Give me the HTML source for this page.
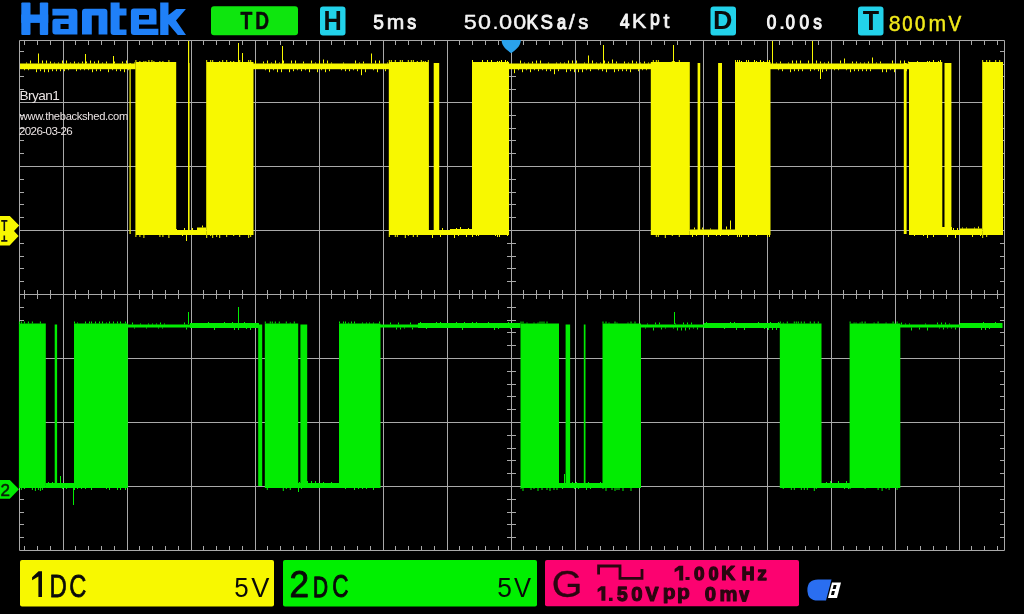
<!DOCTYPE html><html><head><meta charset="utf-8"><style>
html,body{margin:0;padding:0;background:#000;width:1024px;height:614px;overflow:hidden}
svg{position:absolute;left:0;top:0;filter:blur(0.3px)}
text{font-family:"Liberation Sans",sans-serif}
</style></head><body>
<svg width="1024" height="614" viewBox="0 0 1024 614">
<rect width="1024" height="614" fill="#000"/>
<path d="M63.5 40V551 M127.5 40V551 M191.5 40V551 M255.5 40V551 M319.5 40V551 M383.5 40V551 M447.5 40V551 M511.5 40V551 M575.5 40V551 M639.5 40V551 M703.5 40V551 M767.5 40V551 M831.5 40V551 M895.5 40V551 M959.5 40V551 M20 102.5H1004 M20 166.5H1004 M20 230.5H1004 M20 294.5H1004 M20 358.5H1004 M20 422.5H1004 M20 486.5H1004 M19.5 40.5H1004.5V550.5H19.5Z M24.5 41V45 M24.5 550V546 M24.5 290V299 M37.5 41V45 M37.5 550V546 M37.5 290V299 M50.5 41V45 M50.5 550V546 M50.5 290V299 M75.5 41V45 M75.5 550V546 M75.5 290V299 M88.5 41V45 M88.5 550V546 M88.5 290V299 M101.5 41V45 M101.5 550V546 M101.5 290V299 M114.5 41V45 M114.5 550V546 M114.5 290V299 M139.5 41V45 M139.5 550V546 M139.5 290V299 M152.5 41V45 M152.5 550V546 M152.5 290V299 M165.5 41V45 M165.5 550V546 M165.5 290V299 M178.5 41V45 M178.5 550V546 M178.5 290V299 M203.5 41V45 M203.5 550V546 M203.5 290V299 M216.5 41V45 M216.5 550V546 M216.5 290V299 M229.5 41V45 M229.5 550V546 M229.5 290V299 M242.5 41V45 M242.5 550V546 M242.5 290V299 M267.5 41V45 M267.5 550V546 M267.5 290V299 M280.5 41V45 M280.5 550V546 M280.5 290V299 M293.5 41V45 M293.5 550V546 M293.5 290V299 M306.5 41V45 M306.5 550V546 M306.5 290V299 M331.5 41V45 M331.5 550V546 M331.5 290V299 M344.5 41V45 M344.5 550V546 M344.5 290V299 M357.5 41V45 M357.5 550V546 M357.5 290V299 M370.5 41V45 M370.5 550V546 M370.5 290V299 M395.5 41V45 M395.5 550V546 M395.5 290V299 M408.5 41V45 M408.5 550V546 M408.5 290V299 M421.5 41V45 M421.5 550V546 M421.5 290V299 M434.5 41V45 M434.5 550V546 M434.5 290V299 M459.5 41V45 M459.5 550V546 M459.5 290V299 M472.5 41V45 M472.5 550V546 M472.5 290V299 M485.5 41V45 M485.5 550V546 M485.5 290V299 M498.5 41V45 M498.5 550V546 M498.5 290V299 M523.5 41V45 M523.5 550V546 M523.5 290V299 M536.5 41V45 M536.5 550V546 M536.5 290V299 M549.5 41V45 M549.5 550V546 M549.5 290V299 M562.5 41V45 M562.5 550V546 M562.5 290V299 M587.5 41V45 M587.5 550V546 M587.5 290V299 M600.5 41V45 M600.5 550V546 M600.5 290V299 M613.5 41V45 M613.5 550V546 M613.5 290V299 M626.5 41V45 M626.5 550V546 M626.5 290V299 M651.5 41V45 M651.5 550V546 M651.5 290V299 M664.5 41V45 M664.5 550V546 M664.5 290V299 M677.5 41V45 M677.5 550V546 M677.5 290V299 M690.5 41V45 M690.5 550V546 M690.5 290V299 M715.5 41V45 M715.5 550V546 M715.5 290V299 M728.5 41V45 M728.5 550V546 M728.5 290V299 M741.5 41V45 M741.5 550V546 M741.5 290V299 M754.5 41V45 M754.5 550V546 M754.5 290V299 M779.5 41V45 M779.5 550V546 M779.5 290V299 M792.5 41V45 M792.5 550V546 M792.5 290V299 M805.5 41V45 M805.5 550V546 M805.5 290V299 M818.5 41V45 M818.5 550V546 M818.5 290V299 M843.5 41V45 M843.5 550V546 M843.5 290V299 M856.5 41V45 M856.5 550V546 M856.5 290V299 M869.5 41V45 M869.5 550V546 M869.5 290V299 M882.5 41V45 M882.5 550V546 M882.5 290V299 M907.5 41V45 M907.5 550V546 M907.5 290V299 M920.5 41V45 M920.5 550V546 M920.5 290V299 M933.5 41V45 M933.5 550V546 M933.5 290V299 M946.5 41V45 M946.5 550V546 M946.5 290V299 M971.5 41V45 M971.5 550V546 M971.5 290V299 M984.5 41V45 M984.5 550V546 M984.5 290V299 M997.5 41V45 M997.5 550V546 M997.5 290V299 M20 51.5H24 M1004 51.5H1000 M20 64.5H24 M1004 64.5H1000 M507 64.5H516 M20 76.5H24 M1004 76.5H1000 M507 76.5H516 M20 89.5H24 M1004 89.5H1000 M507 89.5H516 M20 115.5H24 M1004 115.5H1000 M507 115.5H516 M20 128.5H24 M1004 128.5H1000 M507 128.5H516 M20 140.5H24 M1004 140.5H1000 M507 140.5H516 M20 153.5H24 M1004 153.5H1000 M507 153.5H516 M20 179.5H24 M1004 179.5H1000 M507 179.5H516 M20 192.5H24 M1004 192.5H1000 M507 192.5H516 M20 204.5H24 M1004 204.5H1000 M507 204.5H516 M20 217.5H24 M1004 217.5H1000 M507 217.5H516 M20 243.5H24 M1004 243.5H1000 M507 243.5H516 M20 256.5H24 M1004 256.5H1000 M507 256.5H516 M20 268.5H24 M1004 268.5H1000 M507 268.5H516 M20 281.5H24 M1004 281.5H1000 M507 281.5H516 M20 307.5H24 M1004 307.5H1000 M507 307.5H516 M20 320.5H24 M1004 320.5H1000 M507 320.5H516 M20 332.5H24 M1004 332.5H1000 M507 332.5H516 M20 345.5H24 M1004 345.5H1000 M507 345.5H516 M20 371.5H24 M1004 371.5H1000 M507 371.5H516 M20 384.5H24 M1004 384.5H1000 M507 384.5H516 M20 396.5H24 M1004 396.5H1000 M507 396.5H516 M20 409.5H24 M1004 409.5H1000 M507 409.5H516 M20 435.5H24 M1004 435.5H1000 M507 435.5H516 M20 448.5H24 M1004 448.5H1000 M507 448.5H516 M20 460.5H24 M1004 460.5H1000 M507 460.5H516 M20 473.5H24 M1004 473.5H1000 M507 473.5H516 M20 499.5H24 M1004 499.5H1000 M507 499.5H516 M20 512.5H24 M1004 512.5H1000 M507 512.5H516 M20 524.5H24 M1004 524.5H1000 M507 524.5H516 M20 537.5H24 M1004 537.5H1000 M507 537.5H516" stroke="#a9a9a9" stroke-width="1" fill="none"/>
<rect x="20" y="63.5" width="115.5" height="5.700000000000003" fill="#f8f800"/><path d="M24.5 69.2v1 M26.5 63.5v-1 M28.5 69.2v1 M30.5 63.5v-3 M36.5 69.2v3 M38.5 63.5v-10 M40.5 69.2v2 M42.5 63.5v-3 M44.5 69.2v3 M46.5 63.5v-3 M48.5 69.2v3 M50.5 63.5v-2 M52.5 69.2v2 M54.5 63.5v-1 M56.5 69.2v2 M58.5 63.5v-1 M60.5 69.2v2 M62.5 63.5v-3 M64.5 69.2v2 M66.5 63.5v-3 M68.5 69.2v1 M70.5 63.5v-1 M74.5 63.5v-2 M76.5 69.2v2 M78.5 63.5v-1 M80.5 69.2v1 M82.5 63.5v-2 M84.5 69.2v1 M86.5 63.5v-2 M88.5 69.2v1 M90.5 63.5v-3 M92.5 69.2v3 M94.5 63.5v-2 M96.5 69.2v2 M98.5 63.5v-3 M100.5 69.2v2 M102.5 63.5v-1 M106.5 63.5v-2 M108.5 69.2v3 M112.5 69.2v1 M114.5 63.5v-2 M116.5 69.2v2 M120.5 69.2v2 M122.5 63.5v-2 M124.5 69.2v3 M126.5 63.5v-3 M128.5 69.2v1 M134.5 63.5v-1" stroke="#f8f800" stroke-width="1"/><rect x="253" y="63.5" width="136" height="5.700000000000003" fill="#f8f800"/><path d="M255.5 63.5v-3 M263.5 63.5v-2 M265.5 69.2v1 M267.5 63.5v-3 M269.5 69.2v3 M271.5 63.5v-1 M273.5 69.2v1 M275.5 63.5v-3 M277.5 69.2v3 M279.5 63.5v-1 M281.5 69.2v3 M283.5 63.5v-3 M289.5 69.2v3 M291.5 63.5v-3 M293.5 69.2v2 M295.5 63.5v-3 M297.5 69.2v1 M301.5 69.2v2 M303.5 63.5v-2 M305.5 69.2v1 M309.5 69.2v3 M311.5 63.5v-3 M315.5 63.5v-1 M317.5 69.2v3 M319.5 63.5v-3 M321.5 69.2v1 M323.5 63.5v-4 M325.5 69.2v3 M327.5 63.5v-3 M329.5 69.2v2 M331.5 63.5v-1 M341.5 69.2v1 M343.5 63.5v-1 M345.5 69.2v2 M349.5 69.2v2 M353.5 69.2v1 M355.5 63.5v-3 M357.5 69.2v2 M359.5 63.5v-1 M361.5 69.2v6 M363.5 63.5v-2 M365.5 69.2v3 M371.5 63.5v-10 M373.5 69.2v1 M375.5 63.5v-3 M377.5 69.2v3 M379.5 63.5v-3 M385.5 69.2v2 M387.5 63.5v-1" stroke="#f8f800" stroke-width="1"/><rect x="509" y="63.5" width="142" height="5.700000000000003" fill="#f8f800"/><path d="M514.5 69.2v4 M518.5 69.2v1 M520.5 63.5v-3 M522.5 69.2v3 M524.5 63.5v-1 M526.5 69.2v1 M528.5 63.5v-1 M530.5 69.2v3 M532.5 63.5v-2 M534.5 69.2v1 M536.5 63.5v-3 M538.5 69.2v2 M540.5 63.5v-3 M542.5 69.2v1 M546.5 69.2v2 M548.5 63.5v-1 M550.5 69.2v2 M554.5 69.2v5 M556.5 63.5v-1 M558.5 69.2v2 M560.5 63.5v-1 M564.5 63.5v-1 M566.5 69.2v3 M568.5 63.5v-3 M570.5 69.2v2 M572.5 63.5v-3 M574.5 69.2v3 M576.5 63.5v-3 M578.5 69.2v3 M582.5 69.2v3 M584.5 63.5v-1 M586.5 69.2v1 M588.5 63.5v-8 M590.5 69.2v2 M592.5 63.5v-3 M596.5 63.5v-1 M598.5 69.2v1 M600.5 63.5v-1 M602.5 69.2v2 M604.5 63.5v-3 M606.5 69.2v3 M608.5 63.5v-2 M612.5 63.5v-4 M614.5 69.2v3 M616.5 63.5v-2 M618.5 69.2v2 M622.5 69.2v2 M624.5 63.5v-2 M626.5 69.2v2 M628.5 63.5v-1 M630.5 69.2v3 M632.5 63.5v-3 M636.5 63.5v-2 M638.5 69.2v2 M640.5 63.5v-1 M642.5 69.2v1 M644.5 63.5v-2 M646.5 69.2v1 M648.5 63.5v-1" stroke="#f8f800" stroke-width="1"/><rect x="770" y="63.5" width="139.5" height="5.700000000000003" fill="#f8f800"/><path d="M776.5 63.5v-1 M778.5 69.2v1 M780.5 63.5v-2 M782.5 69.2v2 M788.5 63.5v-1 M790.5 69.2v3 M792.5 63.5v-3 M794.5 69.2v2 M796.5 63.5v-3 M798.5 69.2v2 M800.5 63.5v-3 M802.5 69.2v2 M808.5 63.5v-3 M810.5 69.2v2 M812.5 63.5v-2 M814.5 69.2v1 M816.5 63.5v-3 M818.5 69.2v2 M820.5 63.5v-2 M822.5 69.2v3 M824.5 63.5v-1 M826.5 69.2v2 M828.5 63.5v-2 M834.5 69.2v1 M838.5 69.2v1 M840.5 63.5v-3 M844.5 63.5v-5 M846.5 69.2v1 M850.5 69.2v3 M852.5 63.5v-2 M854.5 69.2v2 M856.5 63.5v-2 M858.5 69.2v2 M860.5 63.5v-1 M862.5 69.2v2 M864.5 63.5v-1 M866.5 69.2v2 M868.5 63.5v-2 M870.5 69.2v2 M872.5 63.5v-6 M876.5 63.5v-1 M880.5 63.5v-2 M882.5 69.2v3 M886.5 69.2v3 M890.5 69.2v1 M892.5 63.5v-3 M894.5 69.2v3 M900.5 63.5v-3 M904.5 63.5v-3 M906.5 69.2v2 M908.5 63.5v-2" stroke="#f8f800" stroke-width="1"/><rect x="176" y="230" width="21" height="5" fill="#f8f800"/><path d="M176.5 230v-1 M182.5 235v1 M184.5 230v-2 M186.5 235v6 M192.5 230v-2" stroke="#f8f800" stroke-width="1"/><rect x="197" y="227.5" width="9" height="7.5" fill="#f8f800"/><path d="M202.5 227.5v-2" stroke="#f8f800" stroke-width="1"/><rect x="428" y="230" width="22" height="5" fill="#f8f800"/><path d="M432.5 235v3 M434.5 230v-1 M440.5 235v2 M442.5 230v-2" stroke="#f8f800" stroke-width="1"/><rect x="450" y="229" width="22" height="6" fill="#f8f800"/><path d="M454.5 235v3 M456.5 229v-1 M458.5 235v1 M460.5 229v-2 M466.5 235v2 M468.5 229v-1" stroke="#f8f800" stroke-width="1"/><rect x="690" y="229.5" width="46" height="5.5" fill="#f8f800"/><path d="M692.5 235v2 M694.5 229.5v-2 M696.5 235v1 M702.5 229.5v-2 M708.5 235v2 M710.5 229.5v-1 M716.5 235v1 M720.5 235v1 M726.5 229.5v-3 M728.5 235v1 M730.5 229.5v-9" stroke="#f8f800" stroke-width="1"/><rect x="942" y="230" width="18" height="5" fill="#f8f800"/><path d="M947.5 235v2 M953.5 230v-2 M955.5 235v3 M957.5 230v-2" stroke="#f8f800" stroke-width="1"/><rect x="960" y="228.5" width="22" height="6.5" fill="#f8f800"/><path d="M962.5 228.5v-1 M966.5 228.5v-1 M972.5 235v2 M974.5 228.5v-1 M978.5 228.5v-2 M980.5 235v1" stroke="#f8f800" stroke-width="1"/><rect x="135.4" y="62" width="40.79999999999998" height="173" fill="#f8f800"/><path d="M135.9 62v-2 M135.9 235v2 M139.9 62v-1 M139.9 235v2 M143.9 62v-1 M143.9 235v3 M145.9 62v-1 M148.9 62v-2 M151.9 62v-2 M153.9 62v-1 M159.9 62v-1 M159.9 235v2 M162.9 62v-1 M162.9 235v2 M168.9 62v-2 M168.9 235v3" stroke="#f8f800" stroke-width="1"/><rect x="206.2" y="62" width="47.30000000000001" height="173" fill="#f8f800"/><path d="M206.7 62v-2 M206.7 235v3 M210.7 62v-2 M210.7 235v1 M212.7 62v-2 M212.7 235v3 M216.7 235v2 M219.7 62v-1 M219.7 235v3 M222.7 62v-2 M226.7 62v-2 M226.7 235v2 M230.7 62v-1 M233.7 62v-1 M233.7 235v1 M239.7 62v-2 M239.7 235v2 M248.7 62v-2 M248.7 235v3 M250.7 62v-2 M250.7 235v2" stroke="#f8f800" stroke-width="1"/><rect x="388.8" y="62" width="40.099999999999966" height="173" fill="#f8f800"/><path d="M389.3 62v-2 M389.3 235v2 M391.3 62v-2 M395.3 62v-2 M395.3 235v2 M397.3 235v2 M400.3 62v-2 M402.3 62v-2 M405.3 235v3 M408.3 62v-2 M408.3 235v1 M411.3 62v-2 M413.3 62v-2 M413.3 235v2 M417.3 62v-1 M417.3 235v2 M421.3 62v-2 M423.3 62v-1 M425.3 62v-1 M428.3 62v-2" stroke="#f8f800" stroke-width="1"/><rect x="472" y="62" width="37" height="173" fill="#f8f800"/><path d="M472.5 62v-2 M472.5 235v2 M476.5 235v1 M478.5 235v1 M482.5 62v-2 M487.5 62v-2 M491.5 62v-2 M495.5 235v1 M497.5 62v-1 M497.5 235v2 M499.5 62v-1 M499.5 235v2 M501.5 62v-2 M505.5 62v-2 M507.5 62v-1 M507.5 235v1" stroke="#f8f800" stroke-width="1"/><rect x="650.8" y="62" width="39.0" height="173" fill="#f8f800"/><path d="M653.3 62v-2 M656.3 62v-2 M656.3 235v2 M658.3 62v-2 M658.3 235v2 M665.3 235v3 M672.3 62v-1 M672.3 235v1 M674.3 62v-1 M679.3 62v-2 M679.3 235v2" stroke="#f8f800" stroke-width="1"/><rect x="735" y="62" width="35.5" height="173" fill="#f8f800"/><path d="M735.5 62v-2 M737.5 62v-2 M737.5 235v2 M739.5 62v-2 M739.5 235v2 M741.5 62v-1 M741.5 235v2 M746.5 62v-2 M748.5 62v-2 M748.5 235v2 M754.5 62v-2 M756.5 62v-1 M756.5 235v1 M760.5 62v-2 M763.5 62v-1 M767.5 62v-2 M767.5 235v2 M769.5 62v-2 M769.5 235v2" stroke="#f8f800" stroke-width="1"/><rect x="909" y="62" width="33.299999999999955" height="173" fill="#f8f800"/><path d="M914.5 235v1 M917.5 62v-1 M923.5 235v1 M927.5 62v-1 M927.5 235v3 M929.5 62v-1 M933.5 62v-2 M933.5 235v2 M938.5 62v-1 M940.5 62v-2" stroke="#f8f800" stroke-width="1"/><rect x="982.2" y="62" width="20.799999999999955" height="173" fill="#f8f800"/><path d="M982.7 62v-2 M982.7 235v3 M986.7 62v-2 M986.7 235v2 M989.7 62v-2 M995.7 62v-2 M999.7 62v-2" stroke="#f8f800" stroke-width="1"/><rect x="129.5" y="63" width="1.2" height="171" fill="#f8f800"/><rect x="188.3" y="63" width="1.2" height="171" fill="#f8f800"/><rect x="433.7" y="63" width="5.5" height="171" fill="#f8f800"/><rect x="697.6" y="63" width="2.6" height="171" fill="#f8f800"/><rect x="718.1" y="63" width="3.9" height="171" fill="#f8f800"/><rect x="903.8" y="63" width="2.8" height="171" fill="#f8f800"/><rect x="944.5" y="63" width="6.9" height="171" fill="#f8f800"/><rect x="942" y="227" width="10" height="8" fill="#f8f800"/><path d="M238.5 64V43 M242.5 64V53 M282.5 64V46 M603.5 64V45 M673.5 64V45 M772.5 64V41 M812.5 64V41 M820.5 69V79 M85.5 64V54 M113.5 64V56" stroke="#f8f800" stroke-width="1"/><rect x="188" y="41" width="1.2" height="194" fill="#f8f800"/><rect x="127.5" y="324.5" width="62.5" height="3.0" fill="#02ec02"/><path d="M132.5 324.5v-2 M134.5 327.5v1 M140.5 324.5v-1 M146.5 327.5v1 M148.5 324.5v-1 M152.5 324.5v-1 M156.5 324.5v-1 M158.5 327.5v1 M160.5 324.5v-2 M162.5 327.5v1 M164.5 324.5v-1 M184.5 324.5v-2 M186.5 327.5v2" stroke="#02ec02" stroke-width="1"/><rect x="190" y="323" width="69" height="5" fill="#02ec02"/><path d="M208.5 323v-1 M214.5 328v2 M224.5 323v-1 M232.5 323v-1 M234.5 328v2 M238.5 328v2 M244.5 323v-1 M246.5 328v1 M250.5 328v2" stroke="#02ec02" stroke-width="1"/><rect x="380" y="324.5" width="38" height="3.0" fill="#02ec02"/><path d="M390.5 324.5v-2 M396.5 327.5v2 M398.5 324.5v-2 M400.5 327.5v2 M404.5 327.5v1 M410.5 324.5v-2 M412.5 327.5v2" stroke="#02ec02" stroke-width="1"/><rect x="418" y="323" width="102.5" height="5" fill="#02ec02"/><path d="M420.5 323v-1 M426.5 328v1 M436.5 323v-1 M440.5 323v-1 M456.5 323v-1 M462.5 328v2 M464.5 323v-1 M472.5 323v-1 M476.5 323v-1 M488.5 323v-1 M494.5 328v2 M498.5 328v1 M508.5 323v-1 M510.5 328v1" stroke="#02ec02" stroke-width="1"/><rect x="641" y="324.5" width="63" height="3.0" fill="#02ec02"/><path d="M645.5 327.5v1 M647.5 324.5v-1 M653.5 327.5v3 M655.5 324.5v-2 M659.5 324.5v-2 M661.5 327.5v2 M665.5 327.5v1 M673.5 327.5v1 M675.5 324.5v-1 M677.5 327.5v3 M681.5 327.5v3 M683.5 324.5v-2 M685.5 327.5v3 M687.5 324.5v-2 M689.5 327.5v2 M691.5 324.5v-2 M693.5 327.5v1 M697.5 327.5v2" stroke="#02ec02" stroke-width="1"/><rect x="704" y="323" width="76" height="5" fill="#02ec02"/><path d="M706.5 323v-1 M724.5 328v1 M730.5 323v-1 M734.5 323v-1 M736.5 328v2 M744.5 328v2 M758.5 323v-1 M764.5 328v1 M768.5 328v2 M770.5 323v-1 M772.5 328v2 M776.5 328v2 M778.5 323v-1" stroke="#02ec02" stroke-width="1"/><rect x="900" y="324.5" width="60" height="3.0" fill="#02ec02"/><path d="M901.5 324.5v-2 M905.5 324.5v-1 M909.5 324.5v-1 M911.5 327.5v3 M919.5 327.5v2 M925.5 324.5v-1 M927.5 327.5v3 M937.5 324.5v-2 M939.5 327.5v1 M941.5 324.5v-2 M943.5 327.5v2 M945.5 324.5v-2 M947.5 327.5v1 M949.5 324.5v-1 M951.5 327.5v1 M955.5 327.5v2" stroke="#02ec02" stroke-width="1"/><rect x="960" y="323" width="42.5" height="5" fill="#02ec02"/><path d="M981.5 328v2 M983.5 323v-1 M985.5 328v2 M989.5 328v1 M995.5 323v-1" stroke="#02ec02" stroke-width="1"/><rect x="45.5" y="483" width="28.5" height="5" fill="#02ec02"/><path d="M48.5 483v-1 M52.5 483v-1 M60.5 483v-7 M62.5 488v1 M66.5 488v1" stroke="#02ec02" stroke-width="1"/><rect x="298" y="483" width="41" height="5" fill="#02ec02"/><path d="M299.5 483v-1 M301.5 488v1 M307.5 483v-2 M311.5 483v-2 M315.5 483v-2 M323.5 483v-1 M331.5 483v-1" stroke="#02ec02" stroke-width="1"/><rect x="559" y="483" width="44" height="5" fill="#02ec02"/><path d="M562.5 488v1 M564.5 483v-9 M568.5 483v-2 M572.5 483v-1 M574.5 488v1 M576.5 483v-1 M578.5 488v1 M584.5 483v-1 M586.5 488v2 M588.5 483v-1 M590.5 488v1 M600.5 483v-1" stroke="#02ec02" stroke-width="1"/><rect x="821" y="483" width="29" height="5" fill="#02ec02"/><path d="M826.5 483v-1 M830.5 483v-2 M838.5 483v-2 M844.5 488v1 M846.5 483v-2 M848.5 488v1" stroke="#02ec02" stroke-width="1"/><rect x="18.9" y="323.5" width="26.9" height="164.5" fill="#02ec02"/><path d="M19.4 323.5v-2 M21.4 323.5v-2 M21.4 488v2 M24.4 323.5v-2 M24.4 488v1 M28.4 323.5v-2 M32.4 323.5v-2 M32.4 488v2 M35.4 488v3 M38.4 488v2 M40.4 323.5v-2 M40.4 488v3 M42.4 488v2" stroke="#02ec02" stroke-width="1"/><rect x="74" y="323.5" width="53.8" height="164.5" fill="#02ec02"/><path d="M74.5 323.5v-2 M74.5 488v2 M77.5 323.5v-1 M77.5 488v1 M81.5 488v1 M85.5 323.5v-2 M85.5 488v1 M89.5 323.5v-2 M91.5 323.5v-2 M91.5 488v2 M95.5 323.5v-2 M99.5 323.5v-2 M102.5 323.5v-2 M106.5 323.5v-1 M106.5 488v1 M109.5 323.5v-2 M109.5 488v2 M113.5 323.5v-2 M117.5 323.5v-2 M117.5 488v2 M120.5 323.5v-2 M120.5 488v2 M125.5 323.5v-2 M125.5 488v2" stroke="#02ec02" stroke-width="1"/><rect x="264.8" y="323.5" width="33.39999999999998" height="164.5" fill="#02ec02"/><path d="M265.3 323.5v-2 M267.3 488v2 M270.3 323.5v-2 M272.3 323.5v-2 M275.3 323.5v-2 M279.3 323.5v-2 M283.3 488v3 M286.3 323.5v-2 M286.3 488v1 M290.3 323.5v-1 M290.3 488v2 M294.3 323.5v-2" stroke="#02ec02" stroke-width="1"/><rect x="339" y="323.5" width="41.5" height="164.5" fill="#02ec02"/><path d="M339.5 323.5v-2 M343.5 323.5v-2 M345.5 323.5v-2 M345.5 488v1 M348.5 323.5v-1 M351.5 323.5v-2 M354.5 323.5v-2 M354.5 488v2 M358.5 488v1 M362.5 323.5v-1 M362.5 488v1 M366.5 323.5v-1 M366.5 488v1 M369.5 323.5v-1 M373.5 323.5v-1 M373.5 488v2 M379.5 323.5v-2" stroke="#02ec02" stroke-width="1"/><rect x="520.5" y="323.5" width="38.5" height="164.5" fill="#02ec02"/><path d="M521.0 323.5v-2 M521.0 488v1 M523.0 323.5v-2 M523.0 488v3 M527.0 323.5v-1 M531.0 488v2 M534.0 323.5v-1 M534.0 488v1 M538.0 323.5v-1 M538.0 488v3 M540.0 323.5v-2 M542.0 323.5v-2 M542.0 488v2 M544.0 323.5v-2 M547.0 323.5v-2 M547.0 488v2 M550.0 488v3 M554.0 488v2 M557.0 488v2" stroke="#02ec02" stroke-width="1"/><rect x="602.5" y="323.5" width="38.5" height="164.5" fill="#02ec02"/><path d="M603.0 323.5v-2 M603.0 488v1 M606.0 323.5v-2 M606.0 488v3 M609.0 323.5v-1 M612.0 488v2 M615.0 323.5v-2 M615.0 488v3 M617.0 323.5v-1 M617.0 488v2 M619.0 488v2 M623.0 488v3 M628.0 323.5v-1 M631.0 323.5v-2 M631.0 488v3 M635.0 323.5v-2" stroke="#02ec02" stroke-width="1"/><rect x="779.8" y="323.5" width="41.700000000000045" height="164.5" fill="#02ec02"/><path d="M780.3 323.5v-2 M783.3 323.5v-1 M783.3 488v1 M787.3 323.5v-2 M791.3 488v2 M794.3 323.5v-2 M794.3 488v2 M796.3 323.5v-2 M798.3 323.5v-2 M801.3 323.5v-2 M801.3 488v2 M804.3 323.5v-2 M804.3 488v2 M807.3 488v2 M810.3 323.5v-2 M814.3 323.5v-2 M814.3 488v3 M816.3 488v1 M818.3 323.5v-2" stroke="#02ec02" stroke-width="1"/><rect x="849.6" y="323.5" width="50.69999999999993" height="164.5" fill="#02ec02"/><path d="M850.1 323.5v-2 M850.1 488v1 M854.1 323.5v-1 M856.1 323.5v-1 M860.1 323.5v-1 M862.1 323.5v-2 M865.1 323.5v-2 M865.1 488v1 M874.1 323.5v-1 M878.1 323.5v-2 M878.1 488v2 M882.1 488v3 M886.1 323.5v-1 M886.1 488v1 M889.1 488v2 M893.1 323.5v-2 M897.1 323.5v-2 M897.1 488v2" stroke="#02ec02" stroke-width="1"/><rect x="54.7" y="324.5" width="2.4" height="161.5" fill="#02ec02"/><rect x="258.2" y="324.5" width="4" height="161.5" fill="#02ec02"/><rect x="300.4" y="324.5" width="6.8" height="161.5" fill="#02ec02"/><rect x="565.6" y="324.5" width="4.5" height="161.5" fill="#02ec02"/><rect x="583.8" y="324.5" width="1.7" height="161.5" fill="#02ec02"/><path d="M73.5 488V505 M674.5 324V312 M188.5 324V312 M238.5 324V307 M298.5 488V492" stroke="#02ec02" stroke-width="1"/>

<path d="M0 216H9.8L19.2 225.6L14 231L18.6 236L9.6 245.6H0Z" fill="#f8f800"/>
<path d="M1.2 220.9H7.4 M4.3 220.9V231 M4.3 235.4V241 M1.2 240.9H7.4" stroke="#111" stroke-width="1.6" fill="none"/>
<path d="M0 480H9.8L19 489.3L9.8 498.7H0Z" fill="#02ec02"/>
<text x="0.6" y="496" font-size="17" fill="#0a200a" stroke="#0a200a" stroke-width="0.5">2</text>
<path d="M501.6 40H520.8C520.8 46.5 515.5 50 511.2 53.2C506.9 50 501.6 46.5 501.6 40Z" fill="#2aa2ec"/>

<g fill="#1f80f8">
<rect x="21.3" y="2.5" width="9.2" height="32.5" rx="1"/>
<rect x="39.8" y="2.5" width="8.4" height="32.5" rx="1"/>
<rect x="21.3" y="14.5" width="26.9" height="8.4"/>
<path d="M52.4 8.7H74.4Q77.4 8.7 77.4 11.7V34.6H55.4Q52.4 34.6 52.4 31.6V21.7Q52.4 18.7 55.4 18.7H68.6V15.6H52.4Z M60.5 24V29H68.6V24Z" fill-rule="evenodd"/>
<path d="M82 34.6V11.7Q82 8.7 85 8.7H104.4Q107.4 8.7 107.4 11.7V34.6H98.6V15.6H91.8V34.6Z"/>
<path d="M110.6 2.5H119.6V8.4H126.5V15.6H119.6V29.4H126.5V35H113.6Q110.6 35 110.6 32Z"/>
<path d="M133.9 8.4H153.5Q156.5 8.4 156.5 11.4V24.4H139V28.75H158.4V35H133.9Q130.9 35 130.9 32V11.4Q130.9 8.4 133.9 8.4Z M139 15V19.4H149V15Z" fill-rule="evenodd"/>
<path d="M160.2 2.5H168.5V15.1L176.3 9H185.9L176 20.6L186 35H177.8L168.5 24V35H160.2Z"/>
</g>
<rect x="211" y="6.3" width="87" height="29" rx="3" fill="#0ee60e"/>
<rect x="320" y="6.4" width="25.5" height="29" rx="3" fill="#22d2ea"/>
<rect x="710.5" y="6.4" width="25.5" height="29" rx="3" fill="#22d2ea"/>
<rect x="858" y="6.4" width="25.5" height="29" rx="3" fill="#22d2ea"/>
<rect x="20" y="560" width="254" height="46.5" rx="2" fill="#f8f800"/>
<rect x="283" y="560" width="254" height="46.5" rx="2" fill="#00f000"/>
<rect x="545" y="560" width="254" height="46.3" rx="2" fill="#fc0270"/>
<path d="M598.6 574.5V566H620V578.3H642V569" stroke="#2a0610" stroke-width="2.8" fill="none"/>
<text x="0" y="28.80" font-size="23.84" font-weight="bold" fill="#0a0a0a" stroke="#0a0a0a" stroke-width="0.50" stroke-linejoin="round" transform="matrix(0.8117 0 0 1 240.59 0)">T</text><text x="0" y="28.80" font-size="23.84" font-weight="bold" fill="#0a0a0a" stroke="#0a0a0a" stroke-width="0.50" stroke-linejoin="round" transform="matrix(0.8003 0 0 1 255.32 0)">D</text>
<text x="0" y="30.20" font-size="27.91" font-weight="bold" fill="#0a0a0a" transform="matrix(0.9082 0 0 1 323.60 0)">H</text>
<text x="0" y="29.40" font-size="25.87" font-weight="bold" fill="#0a0a0a" transform="matrix(1.0399 0 0 1 713.00 0)">D</text>
<text x="0" y="30.50" font-size="27.47" font-weight="bold" fill="#0a0a0a" transform="matrix(0.9767 0 0 1 862.70 0)">T</text>
<text x="0" y="28.70" font-size="19.98" font-weight="normal" fill="#f4f4f4" stroke="#f4f4f4" stroke-width="0.85" stroke-linejoin="round" transform="matrix(0.9588 0 0 1 373.14 0)">5</text><text x="0" y="28.70" font-size="20.31" font-weight="normal" fill="#f4f4f4" stroke="#f4f4f4" stroke-width="0.63" stroke-linejoin="round" transform="matrix(1.0366 0 0 1 386.83 0)">m</text><text x="0" y="28.70" font-size="19.72" font-weight="normal" fill="#f4f4f4" stroke="#f4f4f4" stroke-width="1.03" stroke-linejoin="round" transform="matrix(0.9032 0 0 1 407.17 0)">s</text>
<text x="0" y="29.00" font-size="20.96" font-weight="normal" fill="#f4f4f4" stroke="#f4f4f4" stroke-width="0.38" stroke-linejoin="round" transform="matrix(1.1243 0 0 1 463.67 0)">5</text><text x="0" y="29.00" font-size="20.92" font-weight="normal" fill="#f4f4f4" stroke="#f4f4f4" stroke-width="0.40" stroke-linejoin="round" transform="matrix(1.1147 0 0 1 477.91 0)">0</text><text x="0" y="29.00" font-size="21.51" font-weight="normal" fill="#f4f4f4" transform="matrix(1.1717 0 0 1 491.90 0)">.</text><text x="0" y="29.00" font-size="20.96" font-weight="normal" fill="#f4f4f4" stroke="#f4f4f4" stroke-width="0.38" stroke-linejoin="round" transform="matrix(1.1251 0 0 1 499.09 0)">0</text><text x="0" y="29.00" font-size="20.92" font-weight="normal" fill="#f4f4f4" stroke="#f4f4f4" stroke-width="0.40" stroke-linejoin="round" transform="matrix(1.1147 0 0 1 513.31 0)">0</text><text x="0" y="29.00" font-size="19.92" font-weight="normal" fill="#f4f4f4" stroke="#f4f4f4" stroke-width="1.10" stroke-linejoin="round" transform="matrix(0.8783 0 0 1 526.45 0)">K</text><text x="0" y="29.00" font-size="20.16" font-weight="normal" fill="#f4f4f4" stroke="#f4f4f4" stroke-width="0.93" stroke-linejoin="round" transform="matrix(0.9254 0 0 1 540.48 0)">S</text><text x="0" y="29.00" font-size="19.68" font-weight="normal" fill="#f4f4f4" stroke="#f4f4f4" stroke-width="1.26" stroke-linejoin="round" transform="matrix(0.8354 0 0 1 557.03 0)">a</text><text x="0" y="29.00" font-size="20.75" font-weight="normal" fill="#f4f4f4" stroke="#f4f4f4" stroke-width="0.52" stroke-linejoin="round" transform="matrix(1.0656 0 0 1 568.78 0)">/</text><text x="0" y="29.00" font-size="20.43" font-weight="normal" fill="#f4f4f4" stroke="#f4f4f4" stroke-width="0.74" stroke-linejoin="round" transform="matrix(0.9843 0 0 1 578.21 0)">s</text>
<text x="0" y="27.60" font-size="19.82" font-weight="normal" fill="#f4f4f4" stroke="#f4f4f4" stroke-width="1.16" stroke-linejoin="round" transform="matrix(0.8609 0 0 1 619.91 0)">4</text><text x="0" y="27.60" font-size="20.64" font-weight="normal" fill="#f4f4f4" stroke="#f4f4f4" stroke-width="0.60" stroke-linejoin="round" transform="matrix(1.0369 0 0 1 631.95 0)">K</text><text x="0" y="25.10" font-size="19.96" font-weight="normal" fill="#f4f4f4" stroke="#f4f4f4" stroke-width="1.07" stroke-linejoin="round" transform="matrix(0.8862 0 0 1 650.03 0)">p</text><text x="0" y="27.60" font-size="20.84" font-weight="normal" fill="#f4f4f4" stroke="#f4f4f4" stroke-width="0.46" stroke-linejoin="round" transform="matrix(1.0890 0 0 1 663.21 0)">t</text>
<text x="0" y="29.00" font-size="19.85" font-weight="normal" fill="#f4f4f4" stroke="#f4f4f4" stroke-width="1.14" stroke-linejoin="round" transform="matrix(0.8652 0 0 1 766.82 0)">0</text><text x="0" y="29.00" font-size="21.40" font-weight="normal" fill="#f4f4f4" stroke="#f4f4f4" stroke-width="0.08" stroke-linejoin="round" transform="matrix(1.2761 0 0 1 778.26 0)">.</text><text x="0" y="29.00" font-size="19.67" font-weight="normal" fill="#f4f4f4" stroke="#f4f4f4" stroke-width="1.27" stroke-linejoin="round" transform="matrix(0.8340 0 0 1 785.69 0)">0</text><text x="0" y="29.00" font-size="19.85" font-weight="normal" fill="#f4f4f4" stroke="#f4f4f4" stroke-width="1.14" stroke-linejoin="round" transform="matrix(0.8652 0 0 1 799.62 0)">0</text><text x="0" y="29.00" font-size="19.86" font-weight="normal" fill="#f4f4f4" stroke="#f4f4f4" stroke-width="1.14" stroke-linejoin="round" transform="matrix(0.8677 0 0 1 813.21 0)">s</text>
<text x="0" y="31.50" font-size="21.74" font-weight="normal" fill="#f2ea1a" stroke="#f2ea1a" stroke-width="0.34" stroke-linejoin="round" transform="matrix(0.9769 0 0 1 888.74 0)">8</text><text x="0" y="31.50" font-size="21.27" font-weight="normal" fill="#f2ea1a" stroke="#f2ea1a" stroke-width="0.67" stroke-linejoin="round" transform="matrix(0.8677 0 0 1 902.27 0)">0</text><text x="0" y="31.50" font-size="21.27" font-weight="normal" fill="#f2ea1a" stroke="#f2ea1a" stroke-width="0.67" stroke-linejoin="round" transform="matrix(0.8677 0 0 1 914.97 0)">0</text><text x="0" y="31.50" font-size="21.74" font-weight="normal" fill="#f2ea1a" stroke="#f2ea1a" stroke-width="0.34" stroke-linejoin="round" transform="matrix(0.9759 0 0 1 928.46 0)">m</text><text x="0" y="31.50" font-size="21.39" font-weight="normal" fill="#f2ea1a" stroke="#f2ea1a" stroke-width="0.58" stroke-linejoin="round" transform="matrix(0.8935 0 0 1 948.38 0)">V</text>
<text x="19.5" y="99.6" font-size="13.6" fill="#ebe4e4" letter-spacing="-0.55">Bryan1</text>
<text x="19.7" y="119.6" font-size="11.2" fill="#ebe4e4" letter-spacing="-0.32">www.thebackshed.com</text>
<text x="18.9" y="134.8" font-size="11.6" fill="#ebe4e4" letter-spacing="-0.6">2026-03-26</text>
<path d="M42 571.2V597.1H38.4V576.6L32.1 580.3V577.2L38.6 571.2Z" fill="#0a0a0a"/>
<text x="0" y="597.10" font-size="30.87" font-weight="normal" fill="#0a0a0a" stroke="#0a0a0a" stroke-width="0.76" stroke-linejoin="round" transform="matrix(0.7771 0 0 1 49.43 0)">D</text><text x="0" y="597.10" font-size="30.80" font-weight="normal" fill="#0a0a0a" stroke="#0a0a0a" stroke-width="0.81" stroke-linejoin="round" transform="matrix(0.7679 0 0 1 69.31 0)">C</text>
<text x="0" y="596.70" font-size="28.34" font-weight="normal" fill="#0a0a0a" transform="matrix(0.9153 0 0 1 234.26 0)">5</text><text x="0" y="596.70" font-size="28.34" font-weight="normal" fill="#0a0a0a" transform="matrix(0.9595 0 0 1 251.28 0)">V</text>
<text x="0" y="597.20" font-size="37.06" font-weight="normal" fill="#0a0a0a" stroke="#0a0a0a" stroke-width="0.90" stroke-linejoin="round" transform="matrix(0.9502 0 0 1 289.56 0)">2</text>
<text x="0" y="597.20" font-size="30.42" font-weight="normal" fill="#0a0a0a" stroke="#0a0a0a" stroke-width="1.27" stroke-linejoin="round" transform="matrix(0.6843 0 0 1 313.03 0)">D</text><text x="0" y="597.20" font-size="30.84" font-weight="normal" fill="#0a0a0a" stroke="#0a0a0a" stroke-width="0.98" stroke-linejoin="round" transform="matrix(0.7312 0 0 1 332.31 0)">C</text>
<text x="0" y="596.80" font-size="28.20" font-weight="normal" fill="#0a0a0a" transform="matrix(0.9350 0 0 1 497.24 0)">5</text><text x="0" y="596.80" font-size="28.20" font-weight="normal" fill="#0a0a0a" transform="matrix(0.9052 0 0 1 514.09 0)">V</text>
<text x="0" y="597.00" font-size="37.21" font-weight="normal" fill="#2a0610" stroke="#2a0610" stroke-width="0.40" stroke-linejoin="round" transform="matrix(1.0570 0 0 1 551.63 0)">G</text>
<path d="M683.2 565.8V580.6H679.2V569.96L674.6 572.20V569.00L678.9000000000001 565.8Z" fill="#2a0610"/>
<path d="M605.4 586.2V600.8H601.4V589.96L597.6 592.20V589.00L601.1 586.2Z" fill="#2a0610"/>
<text x="0" y="580.50" font-size="21.08" font-weight="bold" fill="#2a0610" transform="matrix(1.3786 0 0 1 683.53 0)">.</text><text x="0" y="580.50" font-size="19.16" font-weight="bold" fill="#2a0610" stroke="#2a0610" stroke-width="1.32" stroke-linejoin="round" transform="matrix(0.9874 0 0 1 694.00 0)">0</text><text x="0" y="580.50" font-size="18.73" font-weight="bold" fill="#2a0610" stroke="#2a0610" stroke-width="1.62" stroke-linejoin="round" transform="matrix(0.9309 0 0 1 708.86 0)">0</text><text x="0" y="580.50" font-size="19.30" font-weight="bold" fill="#2a0610" stroke="#2a0610" stroke-width="1.22" stroke-linejoin="round" transform="matrix(1.0081 0 0 1 721.31 0)">K</text><text x="0" y="580.50" font-size="18.76" font-weight="bold" fill="#2a0610" stroke="#2a0610" stroke-width="1.60" stroke-linejoin="round" transform="matrix(0.9345 0 0 1 741.87 0)">H</text><text x="0" y="580.50" font-size="19.04" font-weight="bold" fill="#2a0610" stroke="#2a0610" stroke-width="1.40" stroke-linejoin="round" transform="matrix(0.9713 0 0 1 757.54 0)">z</text>
<text x="0" y="601.00" font-size="21.51" font-weight="bold" fill="#2a0610" transform="matrix(1.1859 0 0 1 607.27 0)">.</text><text x="0" y="601.00" font-size="19.62" font-weight="bold" fill="#2a0610" stroke="#2a0610" stroke-width="1.30" stroke-linejoin="round" transform="matrix(0.9761 0 0 1 617.05 0)">5</text><text x="0" y="601.00" font-size="19.94" font-weight="bold" fill="#2a0610" stroke="#2a0610" stroke-width="1.08" stroke-linejoin="round" transform="matrix(1.0225 0 0 1 631.14 0)">0</text><text x="0" y="601.00" font-size="19.73" font-weight="bold" fill="#2a0610" stroke="#2a0610" stroke-width="1.22" stroke-linejoin="round" transform="matrix(0.9918 0 0 1 645.57 0)">V</text><text x="0" y="598.80" font-size="20.09" font-weight="bold" fill="#2a0610" stroke="#2a0610" stroke-width="0.97" stroke-linejoin="round" transform="matrix(1.0451 0 0 1 662.63 0)">p</text><text x="0" y="598.80" font-size="20.09" font-weight="bold" fill="#2a0610" stroke="#2a0610" stroke-width="0.97" stroke-linejoin="round" transform="matrix(1.0451 0 0 1 677.03 0)">p</text><text x="0" y="601.00" font-size="19.94" font-weight="bold" fill="#2a0610" stroke="#2a0610" stroke-width="1.08" stroke-linejoin="round" transform="matrix(1.0225 0 0 1 704.84 0)">0</text><text x="0" y="601.00" font-size="19.89" font-weight="bold" fill="#2a0610" stroke="#2a0610" stroke-width="1.11" stroke-linejoin="round" transform="matrix(1.0150 0 0 1 719.53 0)">m</text><text x="0" y="601.00" font-size="18.92" font-weight="bold" fill="#2a0610" stroke="#2a0610" stroke-width="1.80" stroke-linejoin="round" transform="matrix(0.8882 0 0 1 739.43 0)">v</text>
<path d="M818 579.5H831.5L826 600.6H818Q807.4 600.6 807.4 590Q807.4 579.5 818 579.5Z" fill="#2a6ef0"/>
<path d="M832 582.4H841L837 598H828Z" fill="#fff"/><rect x="833.5" y="585" width="3" height="4" fill="#000" transform="skewX(-14) translate(146 0)"/><rect x="832.3" y="591" width="3" height="4" fill="#000" transform="skewX(-14) translate(147 0)"/>
</svg></body></html>
